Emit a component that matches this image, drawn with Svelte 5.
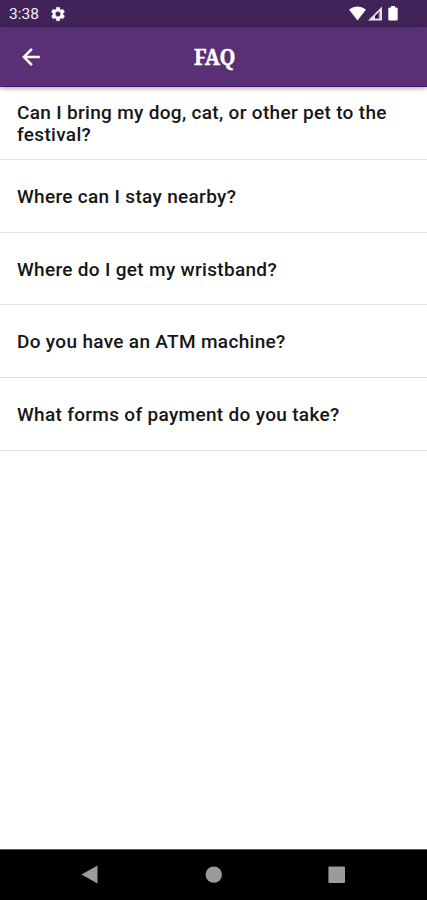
<script lang="ts">
  const questions = [
    'Can I bring my dog, cat, or other pet to the festival?',
    'Where can I stay nearby?',
    'Where do I get my wristband?',
    'Do you have an ATM machine?',
    'What forms of payment do you take?',
  ];
</script>

<div class="screen">
  <div class="status">
    <span class="time">3:38</span>
    <svg class="gear" width="16" height="16" viewBox="0 0 24 24" aria-hidden="true">
      <path fill="#fff" stroke="#fff" stroke-width=".6" fill-rule="evenodd" d="M19.43 12.98c.04-.32.07-.64.07-.98s-.03-.66-.07-.98l2.110-1.650c.19-.15.24-.42.12-.64l-2-3.460c-.12-.22-.39-.3-.61-.22l-2.490 1c-.52-.4-1.080-.73-1.690-.98l-.38-2.650A.49.49 0 0 0 14 2h-4c-.25 0-.46.18-.49.42l-.38 2.650c-.61.25-1.170.59-1.690.98l-2.490-1c-.23-.09-.49 0-.61.22l-2 3.460c-.13.22-.07.49.12.64l2.110 1.650c-.04.32-.07.65-.07.98s.03.66.07.98l-2.110 1.650c-.19.15-.24.42-.12.64l2 3.460c.12.22.39.3.61.22l2.490-1c.52.4 1.080.73 1.690.98l.38 2.650c.03.24.24.42.49.42h4c.25 0 .46-.18.49-.42l.38-2.650c.61-.25 1.170-.59 1.690-.98l2.490 1c.23.09.49 0 .61-.22l2-3.460c.12-.22.07-.49-.12-.64zM12 16a4 4 0 1 1 0-8 4 4 0 0 1 0 8z" />
    </svg>
    <div class="indicators">
      <svg width="17" height="15" viewBox="0 0 17 15" aria-hidden="true">
        <path fill="#fff" d="M0 3.500Q8.500-2.700 17 3.500L8.500 14.500z" />
      </svg>
      <svg width="15" height="15" viewBox="0 0 15 15" aria-hidden="true">
        <path fill="#e4dfe9" d="M14 .5v14H0z" />
        <path fill="#241038" d="M11.600 5.500v7H7v-2.600z" />
        <path fill="#bdb2c6" d="M10.700 7h1.200v5.500h-1.200z" />
      </svg>
      <svg class="battery" width="10" height="15" viewBox="0 0 10 15" aria-hidden="true">
        <path fill="#fff" d="M3 0h4v1.500h1.500a1.200 1.200 0 0 1 1.200 1.200v10.600a1.200 1.200 0 0 1-1.200 1.200h-7A1.200 1.200 0 0 1 .3 13.300V2.700a1.200 1.200 0 0 1 1.200-1.200H3z" />
      </svg>
    </div>
  </div>

  <header>
    <button class="back" aria-label="Back">
      <svg width="26" height="26" viewBox="0 0 24 24" aria-hidden="true">
        <path fill="#fff" stroke="#fff" stroke-width=".4" d="M20 11H7.830l5.590-5.590L12 4l-8 8 8 8 1.410-1.410L7.830 13H20z" />
      </svg>
    </button>
    <h1>FAQ</h1>
  </header>

  <ul>
    {#each questions as question}
      <li>{question}</li>
    {/each}
  </ul>

  <nav>
    <svg width="17" height="20" viewBox="0 0 17 20" aria-hidden="true">
      <path fill="#9b9b9b" d="M16.500 .5v18L.5 9.500z" />
    </svg>
    <svg width="18" height="18" viewBox="0 0 18 18" aria-hidden="true">
      <circle cx="9.800" cy="8.600" r="8.200" fill="#9b9b9b" />
    </svg>
    <svg width="18" height="18" viewBox="0 0 18 18" aria-hidden="true">
      <rect x=".4" y=".4" width="16.600" height="16.600" rx="1" fill="#9b9b9b" />
    </svg>
  </nav>
</div>

<style>
  .screen {
    display: flex; flex-direction: column; height: 900px;
    background: #fff; font-family: Roboto, sans-serif; overflow: hidden;
  }
  .status {
    display: flex; align-items: center; flex: none; height: 27px;
    box-sizing: border-box; padding: 0 29px 0 9px; background: #412359;
  }
  .time { width: 41px; padding-top: 2px; font-size: 15.500px; line-height: 25px; color: #f3eff6; }
  .indicators { display: flex; align-items: center; margin-left: auto; gap: 2px; }
  .battery { margin-left: 3px; }
  header {
    display: grid; grid-template-columns: 60px 1fr 60px; align-items: center;
    flex: none; height: 60px; box-sizing: border-box; position: relative;
    background: #593075; border-bottom: 1px solid #4b1768;
    box-shadow: 0 1px 5px rgba(0, 0, 0, .4);
  }
  .back { display: flex; padding: 1px 0 0 18px; border: 0; background: none; }
  h1 {
    margin: 0 0 2px; text-align: center; color: #fff;
    font: 700 22px 'Noto Serif', 'DejaVu Serif Condensed', 'DejaVu Serif', serif;
    letter-spacing: -.3px; transform: translateX(1px) scaleX(.92);
    -webkit-text-stroke: .4px #fff;
  }
  ul { flex: 1; margin: 0; padding: 0; list-style: none; }
  li {
    display: flex; align-items: center; height: 72.750px; box-sizing: border-box;
    padding: 3px 17px 0; border-bottom: 1px solid #e2e2e2;
    font-size: 19px; font-weight: 500; line-height: 22.500px; letter-spacing: .32px; color: #161616;
  }
  nav {
    display: flex; align-items: center; justify-content: space-between; flex: none;
    height: 51px; box-sizing: border-box; padding: 0 81px; background: #000;
    border-top: 1px solid #555;
  }
</style>
